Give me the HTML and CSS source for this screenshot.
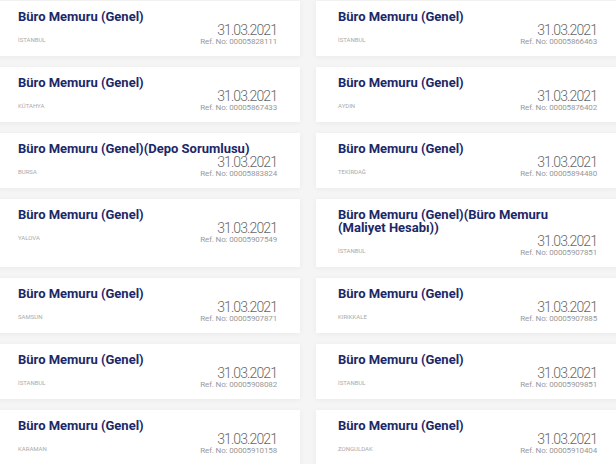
FILE: index.html
```html
<!DOCTYPE html>
<html lang="tr">
<head>
    <meta charset="UTF-8">
    <meta name="viewport" content="width=device-width, initial-scale=1.0">
    <title>İlanlar</title>
    <link rel="stylesheet" href="styles.css">
</head>
<body>
    <div class="list">
        <div class="card">
            <div class="title">Büro Memuru (Genel)</div>
            <div class="meta">
                <span class="city">İstanbul</span>
                <div class="info"><div class="date">31.03.2021</div><div class="ref">Ref. No: 00005828111</div></div>
            </div>
        </div>
        <div class="card">
            <div class="title">Büro Memuru (Genel)</div>
            <div class="meta">
                <span class="city">İstanbul</span>
                <div class="info"><div class="date">31.03.2021</div><div class="ref">Ref. No: 00005866463</div></div>
            </div>
        </div>
        <div class="card">
            <div class="title">Büro Memuru (Genel)</div>
            <div class="meta">
                <span class="city">Kütahya</span>
                <div class="info"><div class="date">31.03.2021</div><div class="ref">Ref. No: 00005867433</div></div>
            </div>
        </div>
        <div class="card">
            <div class="title">Büro Memuru (Genel)</div>
            <div class="meta">
                <span class="city">Aydın</span>
                <div class="info"><div class="date">31.03.2021</div><div class="ref">Ref. No: 00005876402</div></div>
            </div>
        </div>
        <div class="card">
            <div class="title">Büro Memuru (Genel)(Depo Sorumlusu)</div>
            <div class="meta">
                <span class="city">Bursa</span>
                <div class="info"><div class="date">31.03.2021</div><div class="ref">Ref. No: 00005883824</div></div>
            </div>
        </div>
        <div class="card">
            <div class="title">Büro Memuru (Genel)</div>
            <div class="meta">
                <span class="city">Tekirdağ</span>
                <div class="info"><div class="date">31.03.2021</div><div class="ref">Ref. No: 00005894480</div></div>
            </div>
        </div>
        <div class="card">
            <div class="title">Büro Memuru (Genel)</div>
            <div class="meta">
                <span class="city">Yalova</span>
                <div class="info"><div class="date">31.03.2021</div><div class="ref">Ref. No: 00005907549</div></div>
            </div>
        </div>
        <div class="card">
            <div class="title">Büro Memuru (Genel)(Büro Memuru<br>(Maliyet Hesabı))</div>
            <div class="meta">
                <span class="city">İstanbul</span>
                <div class="info"><div class="date">31.03.2021</div><div class="ref">Ref. No: 00005907851</div></div>
            </div>
        </div>
        <div class="card">
            <div class="title">Büro Memuru (Genel)</div>
            <div class="meta">
                <span class="city">Samsun</span>
                <div class="info"><div class="date">31.03.2021</div><div class="ref">Ref. No: 00005907871</div></div>
            </div>
        </div>
        <div class="card">
            <div class="title">Büro Memuru (Genel)</div>
            <div class="meta">
                <span class="city">Kırıkkale</span>
                <div class="info"><div class="date">31.03.2021</div><div class="ref">Ref. No: 00005907885</div></div>
            </div>
        </div>
        <div class="card">
            <div class="title">Büro Memuru (Genel)</div>
            <div class="meta">
                <span class="city">İstanbul</span>
                <div class="info"><div class="date">31.03.2021</div><div class="ref">Ref. No: 00005908082</div></div>
            </div>
        </div>
        <div class="card">
            <div class="title">Büro Memuru (Genel)</div>
            <div class="meta">
                <span class="city">İstanbul</span>
                <div class="info"><div class="date">31.03.2021</div><div class="ref">Ref. No: 00005909851</div></div>
            </div>
        </div>
        <div class="card">
            <div class="title">Büro Memuru (Genel)</div>
            <div class="meta">
                <span class="city">Karaman</span>
                <div class="info"><div class="date">31.03.2021</div><div class="ref">Ref. No: 00005910158</div></div>
            </div>
        </div>
        <div class="card">
            <div class="title">Büro Memuru (Genel)</div>
            <div class="meta">
                <span class="city">Zonguldak</span>
                <div class="info"><div class="date">31.03.2021</div><div class="ref">Ref. No: 00005910404</div></div>
            </div>
        </div>
    </div>
</body>
</html>
```

FILE: styles.css
```css
body { margin: 0; background: #f5f5f5; font-family: Roboto, "Noto Sans", sans-serif; overflow: hidden; }
.list { display: grid; grid-template-columns: 304px 304px; column-gap: 16px; row-gap: 11px; margin: 1px 0 0 -4px; }
.card { background: #fff; padding: 9px 23px 9px 22px; box-shadow: 0 1px 6px rgba(0, 0, 0, 0.05); }
.title { color: #1c2867; font-size: 13px; font-weight: 700; line-height: 13px; white-space: nowrap; }
.meta { display: flex; justify-content: space-between; align-items: flex-end; }
.city { color: #aaa; font-size: 6px; text-transform: uppercase; line-height: 10px; margin-bottom: 2px; }
.info { text-align: right; }
.date { color: #666; font-size: 14px; font-weight: 300; line-height: 14px; letter-spacing: -0.9px; }
.ref { color: #999; font-size: 8px; line-height: 10px; letter-spacing: -0.15px; }
```
